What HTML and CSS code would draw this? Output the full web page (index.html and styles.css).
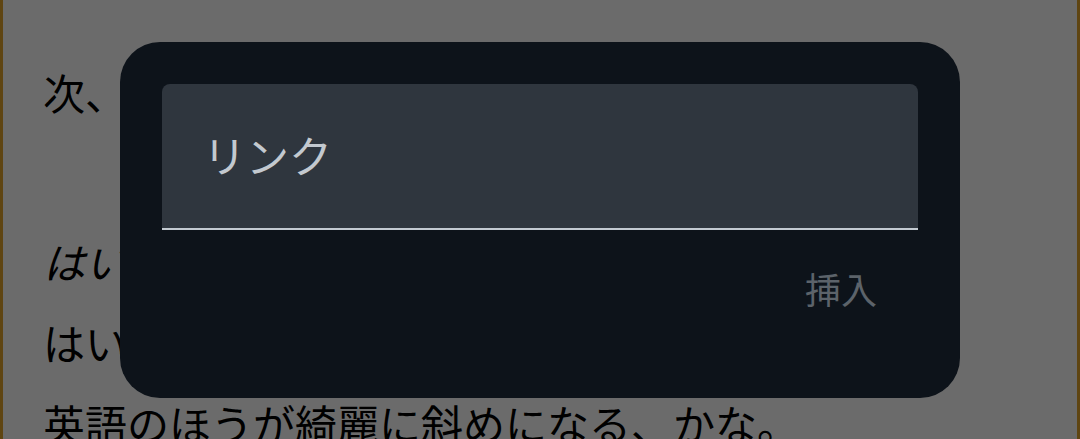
FILE: index.html
```html
<!DOCTYPE html>
<html lang="ja">
<head>
<meta charset="utf-8">
<link rel="stylesheet" href="styles.css">
</head>
<body>
<main class="page">
  <p class="para first">次、ここで斜体を試してみます。</p>
  <p class="para"><em>はい、これは斜体です。</em></p>
  <p class="para">はい、これは普通です。</p>
  <p class="para">英語のほうが綺麗に斜めになる、かな。</p>
</main>
<div class="scrim">
  <div class="dialog">
    <div class="field">
      <input class="field-input" type="text" placeholder="リンク">
    </div>
    <div class="actions">
      <button class="btn-insert" type="button">挿入</button>
    </div>
  </div>
</div>
</body>
</html>
```

FILE: styles.css
```css
html, body {
  margin: 0;
  padding: 0;
  height: 100%;
  overflow: hidden;
}

body {
  background: #ffffff;
  font-family: "Noto Sans CJK JP", "Noto Sans", sans-serif;
}

.page {
  box-sizing: border-box;
  height: 439px;
  border-left: 3px solid #e3a52c;
  border-right: 3px solid #e3a52c;
  padding: 62px 0 0 40px;
  color: #000;
}

.para {
  margin: 0 0 21px;
  font-size: 42px;
  line-height: 60px;
  white-space: nowrap;
}

.para.first {
  margin-bottom: 109px;
}

.para em {
  font-style: italic;
}

.scrim {
  position: fixed;
  inset: 0;
  background: rgba(0, 0, 0, 0.58);
  display: flex;
  align-items: center;
  justify-content: center;
}

.dialog {
  box-sizing: border-box;
  width: 840px;
  height: 356px;
  background: #0d131a;
  border-radius: 40px;
  padding: 42px;
  display: flex;
  flex-direction: column;
}

.field {
  background: #2f363e;
  border-radius: 8px 8px 0 0;
  border-bottom: 2px solid #c3cad1;
  height: 144px;
  display: flex;
  align-items: center;
}

.field-input {
  flex: 1;
  border: 0;
  outline: 0;
  background: transparent;
  padding: 0 0 4px 41px;
  font-family: "Noto Sans CJK JP", "Noto Sans", sans-serif;
  font-size: 43px;
  color: #c3c9cf;
}

.field-input::placeholder {
  color: #c3c9cf;
  opacity: 1;
}

.actions {
  display: flex;
  justify-content: flex-end;
  padding-top: 33px;
  padding-right: 41px;
}

.btn-insert {
  border: 0;
  background: transparent;
  padding: 0;
  font-family: "Noto Sans CJK JP", "Noto Sans", sans-serif;
  font-size: 36px;
  line-height: 50px;
  color: #5c636a;
}
```
